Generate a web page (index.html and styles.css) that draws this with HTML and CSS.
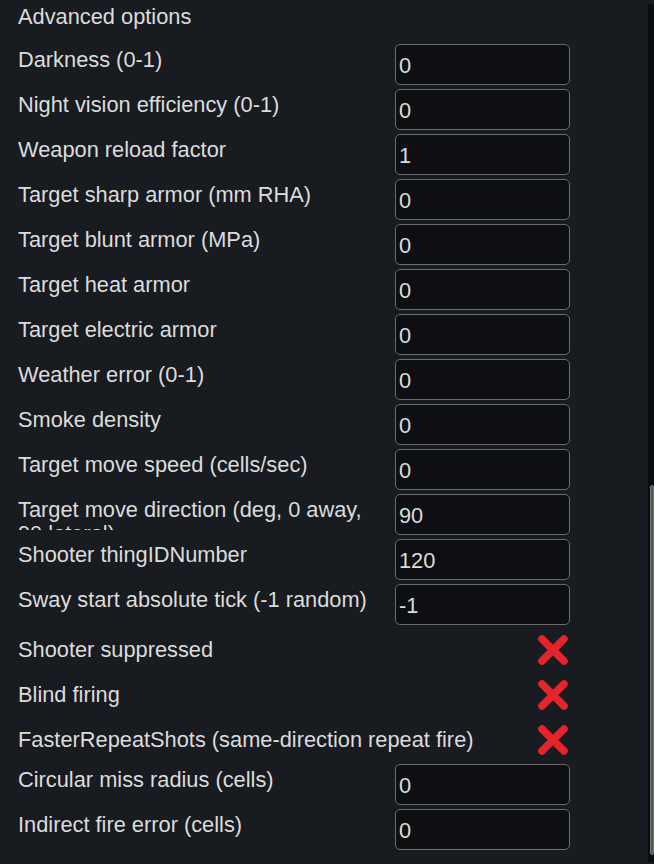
FILE: index.html
```html
<!doctype html>
<html lang="en">
  <head>
    <meta charset="UTF-8" />
    <meta name="viewport" content="width=device-width, initial-scale=1.0" />
    <title>Advanced options</title>
    <link rel="stylesheet" href="styles.css">
  </head>
  <body>
    <main class="panel">
        <h2 class="panel-title">Advanced options</h2>

        <div class="row">
            <label class="row-label" for="darkness">Darkness (0-1)</label>
            <input class="field" type="text" id="darkness" value="0">
        </div>
        <div class="row">
            <label class="row-label" for="night-vision">Night vision efficiency (0-1)</label>
            <input class="field" type="text" id="night-vision" value="0">
        </div>
        <div class="row">
            <label class="row-label" for="reload">Weapon reload factor</label>
            <input class="field" type="text" id="reload" value="1">
        </div>
        <div class="row">
            <label class="row-label" for="sharp-armor">Target sharp armor (mm RHA)</label>
            <input class="field" type="text" id="sharp-armor" value="0">
        </div>
        <div class="row">
            <label class="row-label" for="blunt-armor">Target blunt armor (MPa)</label>
            <input class="field" type="text" id="blunt-armor" value="0">
        </div>
        <div class="row">
            <label class="row-label" for="heat-armor">Target heat armor</label>
            <input class="field" type="text" id="heat-armor" value="0">
        </div>
        <div class="row">
            <label class="row-label" for="electric-armor">Target electric armor</label>
            <input class="field" type="text" id="electric-armor" value="0">
        </div>
        <div class="row">
            <label class="row-label" for="weather">Weather error (0-1)</label>
            <input class="field" type="text" id="weather" value="0">
        </div>
        <div class="row">
            <label class="row-label" for="smoke">Smoke density</label>
            <input class="field" type="text" id="smoke" value="0">
        </div>
        <div class="row">
            <label class="row-label" for="move-speed">Target move speed (cells/sec)</label>
            <input class="field" type="text" id="move-speed" value="0">
        </div>
        <div class="row">
            <label class="row-label" for="move-direction">Target move direction (deg, 0 away, 90 lateral)</label>
            <input class="field" type="text" id="move-direction" value="90">
        </div>
        <div class="row">
            <label class="row-label" for="thing-id">Shooter thingIDNumber</label>
            <input class="field" type="text" id="thing-id" value="120">
        </div>
        <div class="row">
            <label class="row-label" for="sway">Sway start absolute tick (-1 random)</label>
            <input class="field" type="text" id="sway" value="-1">
        </div>

        <div class="row row-check">
            <span class="row-label">Shooter suppressed</span>
            <svg class="cross" viewBox="0 0 34 32" aria-hidden="true">
                <path d="M6 5 L28 27 M28 5 L6 27" />
            </svg>
        </div>
        <div class="row row-check">
            <span class="row-label">Blind firing</span>
            <svg class="cross" viewBox="0 0 34 32" aria-hidden="true">
                <path d="M6 5 L28 27 M28 5 L6 27" />
            </svg>
        </div>
        <div class="row row-check">
            <span class="row-label">FasterRepeatShots (same-direction repeat fire)</span>
            <svg class="cross" viewBox="0 0 34 32" aria-hidden="true">
                <path d="M6 5 L28 27 M28 5 L6 27" />
            </svg>
        </div>

        <div class="row">
            <label class="row-label" for="miss-radius">Circular miss radius (cells)</label>
            <input class="field" type="text" id="miss-radius" value="0">
        </div>
        <div class="row">
            <label class="row-label" for="indirect">Indirect fire error (cells)</label>
            <input class="field" type="text" id="indirect" value="0">
        </div>
    </main>

    <div class="scrollbar"><div class="scrollbar-thumb"></div></div>
  </body>
</html>
```

FILE: styles.css
```css
* {
    box-sizing: border-box;
    margin: 0;
    padding: 0;
}

body {
    width: 654px;
    height: 864px;
    overflow: hidden;
    background-color: #181b20;
    color: #dcdcdc;
    font-family: "Liberation Sans", Arial, sans-serif;
    font-size: 21.8px;
    position: relative;
}

.panel {
    width: 570px;
    padding-left: 18px;
}

.panel-title {
    font-size: 21.8px;
    font-weight: 400;
    line-height: 24px;
    height: 42px;
    padding-top: 5px;
}

.row {
    display: flex;
    align-items: flex-start;
    gap: 7px;
    height: 45px;
}

.row-label {
    flex: 1;
    line-height: 24px;
    padding-top: 6px;
    max-height: 38px;
    overflow: hidden;
}

.field {
    flex: none;
    width: 175px;
    height: 41px;
    margin-top: 2px;
    padding: 2px 3px 0;
    background-color: #0e0f12;
    border: 1.5px solid #6c6c6c;
    border-radius: 5px;
    color: #dcdcdc;
    font-family: inherit;
    font-size: 21.8px;
    outline: none;
}

.row-check {
    align-items: center;
}

.row-check .row-label {
    padding-top: 0;
    white-space: nowrap;
}

.cross {
    flex: none;
    width: 34px;
    height: 32px;
}

.cross path {
    fill: none;
    stroke: #e3252b;
    stroke-width: 7.5;
    stroke-linecap: round;
}

.scrollbar {
    position: absolute;
    top: 4px;
    right: 0;
    width: 6px;
    height: 858px;
    background-color: #0b0c0e;
    border-radius: 3px 0 0 3px;
}

.scrollbar-thumb {
    position: absolute;
    top: 481px;
    left: 2px;
    width: 4px;
    height: 370px;
    background-color: #555;
    border: 1px solid #777;
    border-radius: 2px;
}
```
